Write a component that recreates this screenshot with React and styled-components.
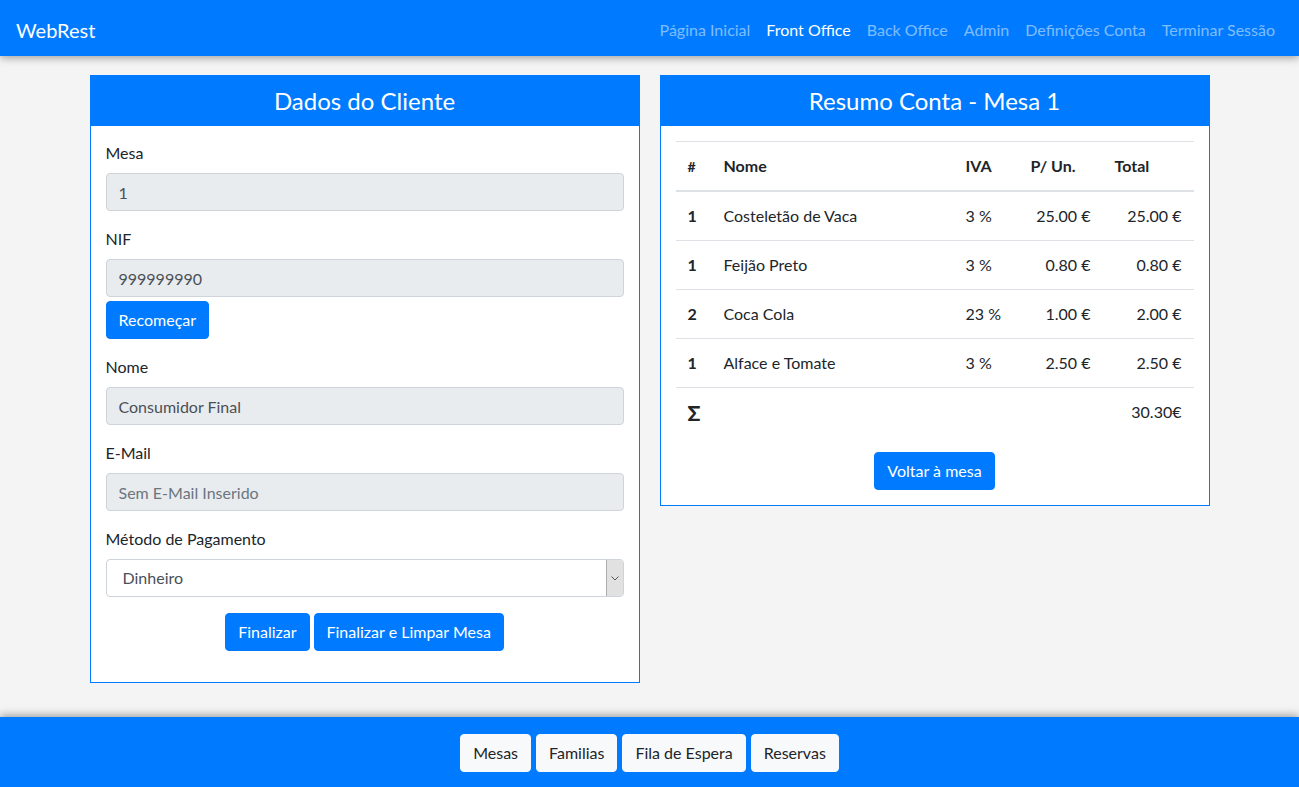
import React from "react";
import styled, { createGlobalStyle } from "styled-components";

const GlobalStyle = createGlobalStyle`
  * { box-sizing: border-box; }
  body {
    margin: 0;
    background: #f4f4f4;
    color: #212529;
    font-family: "Lato", "Noto Sans", sans-serif;
    font-size: 16px;
    line-height: 1.5;
  }
`;

const Page = styled.div`
  display: flex;
  flex-direction: column;
  min-height: 100vh;
`;

const Navbar = styled.nav`
  position: relative;
  z-index: 2;
  height: 56px;
  background: #007bff;
  display: flex;
  align-items: center;
  justify-content: space-between;
  padding: 4px 16px 0;
  box-shadow: 0 2px 8px rgba(0, 0, 0, 0.35);
`;

const Brand = styled.a`
  color: #fff;
  font-size: 20px;
  line-height: 30px;
  text-decoration: none;
`;

const NavLinks = styled.div`
  display: flex;
`;

const NavLink = styled.a`
  padding: 8px;
  color: ${(p) => (p.$active ? "#fff" : "rgba(255, 255, 255, 0.5)")};
  text-decoration: none;
`;

const Main = styled.main`
  flex: 1;
  display: flex;
  justify-content: center;
  align-items: flex-start;
  gap: 20px;
  padding-top: 19px;
`;

const Card = styled.section`
  width: 550px;
  background: #fff;
  border: 1px solid #007bff;
`;

const CardHeader = styled.h4`
  margin: 0;
  background: #007bff;
  color: #fff;
  text-align: center;
  font-weight: 400;
  font-size: 24px;
  line-height: 29px;
  padding: 10px 0 11px;
`;

const CardBody = styled.div`
  padding: 15px;
`;

const FormGroup = styled.div`
  margin-bottom: 16px;
`;

const Label = styled.label`
  display: block;
  margin-bottom: 8px;
`;

const Input = styled.input`
  display: block;
  width: 100%;
  height: 38px;
  padding: 6px 12px;
  font: inherit;
  color: #495057;
  background: #e9ecef;
  border: 1px solid #ced4da;
  border-radius: 4px;
  &::placeholder {
    color: #6c757d;
  }
`;

const SelectWrap = styled.div`
  display: flex;
  height: 38px;
  border: 1px solid #ced4da;
  border-radius: 4px;
  background: #fff;
  overflow: hidden;
`;

const Select = styled.select`
  flex: 1;
  appearance: none;
  border: none;
  background: transparent;
  font: inherit;
  color: #495057;
  padding: 0 16px;
  outline: none;
`;

const ArrowBox = styled.span`
  width: 17px;
  display: flex;
  align-items: center;
  justify-content: center;
  background: #e1e1e1;
  border-left: 1px solid #adadad;
`;

const Button = styled.button`
  display: inline-block;
  height: 38px;
  padding: 6px 12px;
  font: inherit;
  color: ${(p) => (p.$light ? "#212529" : "#fff")};
  background: ${(p) => (p.$light ? "#f8f9fa" : "#007bff")};
  border: 1px solid ${(p) => (p.$light ? "#f8f9fa" : "#007bff")};
  border-radius: 4px;
  cursor: pointer;
`;

const ButtonRow = styled.div`
  display: flex;
  justify-content: ${(p) => (p.$start ? "flex-start" : "center")};
  gap: ${(p) => p.$gap || "4px"};
  margin-top: ${(p) => p.$mt || "0"};
  margin-bottom: ${(p) => p.$mb || "0"};
`;

const Table = styled.table`
  width: 100%;
  border-collapse: collapse;
  margin-bottom: 16px;
  table-layout: fixed;
`;

const Th = styled.th`
  text-align: left;
  padding: 12px;
  border-top: 1px solid #dee2e6;
  border-bottom: 2px solid #dee2e6;
  font-weight: 700;
  font-size: ${(p) => (p.$small ? "14px" : "16px")};
  width: ${(p) => p.$w || "auto"};
`;

const Td = styled.td`
  padding: 12px;
  border-top: 1px solid #dee2e6;
  text-align: ${(p) => (p.$right ? "right" : "left")};
  font-weight: ${(p) => (p.$bold ? 700 : 400)};
  white-space: nowrap;
`;

const Sigma = styled.span`
  display: inline-block;
  vertical-align: top;
  height: 24px;
  font-size: 21px;
  font-weight: 900;
  line-height: 26px;
`;

const Footer = styled.footer`
  position: relative;
  z-index: 2;
  height: 70px;
  background: #007bff;
  padding-top: 17px;
  box-shadow: 0 -2px 8px rgba(0, 0, 0, 0.35);
`;

const Chevron = () => (
  <svg width="8" height="5" viewBox="0 0 8 5">
    <path d="M0.5 0.5 L4 4 L7.5 0.5" fill="none" stroke="#555" strokeWidth="1" />
  </svg>
);

const items = [
  { qty: 1, name: "Costeletão de Vaca", iva: "3 %", price: "25.00 €", total: "25.00 €" },
  { qty: 1, name: "Feijão Preto", iva: "3 %", price: "0.80 €", total: "0.80 €" },
  { qty: 2, name: "Coca Cola", iva: "23 %", price: "1.00 €", total: "2.00 €" },
  { qty: 1, name: "Alface e Tomate", iva: "3 %", price: "2.50 €", total: "2.50 €" },
];

export default function App() {
  return (
    <>
      <GlobalStyle />
      <Page>
        <Navbar>
          <Brand href="#">WebRest</Brand>
          <NavLinks>
            <NavLink href="#">Página Inicial</NavLink>
            <NavLink href="#" $active>Front Office</NavLink>
            <NavLink href="#">Back Office</NavLink>
            <NavLink href="#">Admin</NavLink>
            <NavLink href="#">Definições Conta</NavLink>
            <NavLink href="#">Terminar Sessão</NavLink>
          </NavLinks>
        </Navbar>
        <Main>
          <Card>
            <CardHeader>Dados do Cliente</CardHeader>
            <CardBody>
              <FormGroup>
                <Label>Mesa</Label>
                <Input value="1" readOnly />
              </FormGroup>
              <FormGroup>
                <Label>NIF</Label>
                <Input value="999999990" readOnly />
                <ButtonRow $start $mt="4px">
                  <Button>Recomeçar</Button>
                </ButtonRow>
              </FormGroup>
              <FormGroup>
                <Label>Nome</Label>
                <Input value="Consumidor Final" readOnly />
              </FormGroup>
              <FormGroup>
                <Label>E-Mail</Label>
                <Input placeholder="Sem E-Mail Inserido" readOnly />
              </FormGroup>
              <FormGroup>
                <Label>Método de Pagamento</Label>
                <SelectWrap>
                  <Select defaultValue="Dinheiro">
                    <option>Dinheiro</option>
                    <option>Multibanco</option>
                  </Select>
                  <ArrowBox>
                    <Chevron />
                  </ArrowBox>
                </SelectWrap>
              </FormGroup>
              <ButtonRow $mb="16px">
                <Button>Finalizar</Button>
                <Button>Finalizar e Limpar Mesa</Button>
              </ButtonRow>
            </CardBody>
          </Card>
          <Card>
            <CardHeader>Resumo Conta - Mesa 1</CardHeader>
            <CardBody>
              <Table>
                <thead>
                  <tr>
                    <Th $w="36px" $small>#</Th>
                    <Th $w="242px">Nome</Th>
                    <Th $w="65px">IVA</Th>
                    <Th $w="84px">P/ Un.</Th>
                    <Th>Total</Th>
                  </tr>
                </thead>
                <tbody>
                  {items.map((it) => (
                    <tr key={it.name}>
                      <Td $bold>{it.qty}</Td>
                      <Td>{it.name}</Td>
                      <Td>{it.iva}</Td>
                      <Td $right>{it.price}</Td>
                      <Td $right>{it.total}</Td>
                    </tr>
                  ))}
                  <tr>
                    <Td><Sigma>Σ</Sigma></Td>
                    <Td />
                    <Td />
                    <Td />
                    <Td $right>30.30€</Td>
                  </tr>
                </tbody>
              </Table>
              <ButtonRow>
                <Button>Voltar à mesa</Button>
              </ButtonRow>
            </CardBody>
          </Card>
        </Main>
        <Footer>
          <ButtonRow $gap="5px">
            <Button $light>Mesas</Button>
            <Button $light>Familias</Button>
            <Button $light>Fila de Espera</Button>
            <Button $light>Reservas</Button>
          </ButtonRow>
        </Footer>
      </Page>
    </>
  );
}
